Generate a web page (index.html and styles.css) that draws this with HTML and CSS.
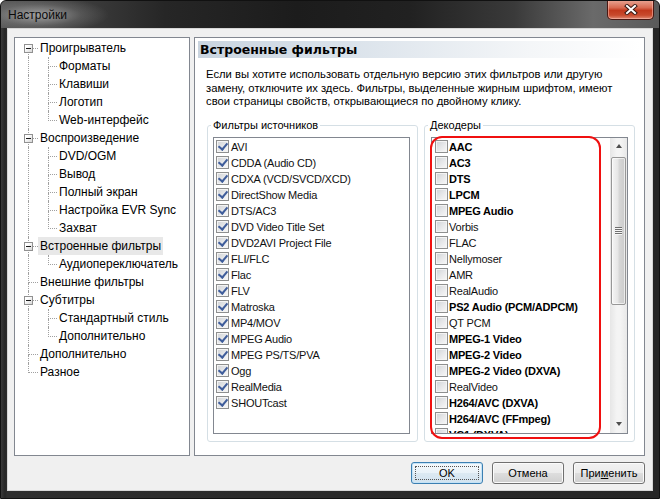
FILE: index.html
```html
<!DOCTYPE html>
<html lang="ru">
<head>
<meta charset="utf-8">
<title>Настройки</title>
<link rel="stylesheet" href="styles.css">
</head>
<body>
<div class="window">
  <div class="titlebar">
    <span class="title">Настройки</span>
    <div class="close">
      <svg width="14" height="11" viewBox="0 0 14 11"><path d="M3 2 L11 9 M11 2 L3 9" stroke="#3a1a14" stroke-width="4" stroke-linecap="square"/><path d="M3 2 L11 9 M11 2 L3 9" stroke="#fff" stroke-width="2" stroke-linecap="square"/></svg>
    </div>
  </div>
  <div class="client">
    <div class="main">
      <div class="tree">
        <div class="row r0 first"><span class="ind"></span><span class="ln"><span class="t"></span><span class="b"></span><i class="exp"></i></span><span class="txt">Проигрыватель</span></div>
        <div class="row r1"><span class="ind"></span><span class="vl"></span><span class="ln"><span class="t"></span><span class="b"></span></span><span class="txt">Форматы</span></div>
        <div class="row r1"><span class="ind"></span><span class="vl"></span><span class="ln"><span class="t"></span><span class="b"></span></span><span class="txt">Клавиши</span></div>
        <div class="row r1"><span class="ind"></span><span class="vl"></span><span class="ln"><span class="t"></span><span class="b"></span></span><span class="txt">Логотип</span></div>
        <div class="row r1 last"><span class="ind"></span><span class="vl"></span><span class="ln"><span class="t"></span><span class="b"></span></span><span class="txt">Web-интерфейс</span></div>
        <div class="row r0"><span class="ind"></span><span class="ln"><span class="t"></span><span class="b"></span><i class="exp"></i></span><span class="txt">Воспроизведение</span></div>
        <div class="row r1"><span class="ind"></span><span class="vl"></span><span class="ln"><span class="t"></span><span class="b"></span></span><span class="txt">DVD/OGM</span></div>
        <div class="row r1"><span class="ind"></span><span class="vl"></span><span class="ln"><span class="t"></span><span class="b"></span></span><span class="txt">Вывод</span></div>
        <div class="row r1"><span class="ind"></span><span class="vl"></span><span class="ln"><span class="t"></span><span class="b"></span></span><span class="txt">Полный экран</span></div>
        <div class="row r1"><span class="ind"></span><span class="vl"></span><span class="ln"><span class="t"></span><span class="b"></span></span><span class="txt">Настройка EVR Sync</span></div>
        <div class="row r1 last"><span class="ind"></span><span class="vl"></span><span class="ln"><span class="t"></span><span class="b"></span></span><span class="txt">Захват</span></div>
        <div class="row r0"><span class="ind"></span><span class="ln"><span class="t"></span><span class="b"></span><i class="exp"></i></span><span class="txt sel">Встроенные фильтры</span></div>
        <div class="row r1 last"><span class="ind"></span><span class="vl"></span><span class="ln"><span class="t"></span><span class="b"></span></span><span class="txt">Аудиопереключатель</span></div>
        <div class="row r0"><span class="ind"></span><span class="ln"><span class="t"></span><span class="b"></span></span><span class="txt">Внешние фильтры</span></div>
        <div class="row r0"><span class="ind"></span><span class="ln"><span class="t"></span><span class="b"></span><i class="exp"></i></span><span class="txt">Субтитры</span></div>
        <div class="row r1"><span class="ind"></span><span class="vl"></span><span class="ln"><span class="t"></span><span class="b"></span></span><span class="txt">Стандартный стиль</span></div>
        <div class="row r1 last"><span class="ind"></span><span class="vl"></span><span class="ln"><span class="t"></span><span class="b"></span></span><span class="txt">Дополнительно</span></div>
        <div class="row r0"><span class="ind"></span><span class="ln"><span class="t"></span><span class="b"></span></span><span class="txt">Дополнительно</span></div>
        <div class="row r0 last"><span class="ind"></span><span class="ln"><span class="t"></span><span class="b"></span></span><span class="txt">Разное</span></div>
      </div>
      <div class="page">
        <div class="page-head">Встроенные фильтры</div>
        <p class="desc">Если вы хотите использовать отдельную версию этих фильтров или другую<br>замену, отключите их здесь. Фильтры, выделенные жирным шрифтом, имеют<br>свои страницы свойств, открывающиеся по двойному клику.</p>
        <div class="groups">
          <div class="group">
            <span class="legend">Фильтры источников</span>
            <div class="listbox">
              <div class="items">
                <div class="item"><span class="cb on"></span>AVI</div>
                <div class="item"><span class="cb on"></span>CDDA (Audio CD)</div>
                <div class="item"><span class="cb on"></span>CDXA (VCD/SVCD/XCD)</div>
                <div class="item"><span class="cb on"></span>DirectShow Media</div>
                <div class="item"><span class="cb on"></span>DTS/AC3</div>
                <div class="item"><span class="cb on"></span>DVD Video Title Set</div>
                <div class="item"><span class="cb on"></span>DVD2AVI Project File</div>
                <div class="item"><span class="cb on"></span>FLI/FLC</div>
                <div class="item"><span class="cb on"></span>Flac</div>
                <div class="item"><span class="cb on"></span>FLV</div>
                <div class="item"><span class="cb on"></span>Matroska</div>
                <div class="item"><span class="cb on"></span>MP4/MOV</div>
                <div class="item"><span class="cb on"></span>MPEG Audio</div>
                <div class="item"><span class="cb on"></span>MPEG PS/TS/PVA</div>
                <div class="item"><span class="cb on"></span>Ogg</div>
                <div class="item"><span class="cb on"></span>RealMedia</div>
                <div class="item"><span class="cb on"></span>SHOUTcast</div>
              </div>
            </div>
          </div>
          <div class="group dec">
            <span class="legend">Декодеры</span>
            <div class="listbox">
              <div class="items">
                <div class="item bd"><span class="cb"></span>AAC</div>
                <div class="item bd"><span class="cb"></span>AC3</div>
                <div class="item bd"><span class="cb"></span>DTS</div>
                <div class="item bd"><span class="cb"></span>LPCM</div>
                <div class="item bd"><span class="cb"></span>MPEG Audio</div>
                <div class="item"><span class="cb"></span>Vorbis</div>
                <div class="item"><span class="cb"></span>FLAC</div>
                <div class="item"><span class="cb"></span>Nellymoser</div>
                <div class="item"><span class="cb"></span>AMR</div>
                <div class="item"><span class="cb"></span>RealAudio</div>
                <div class="item bd"><span class="cb"></span>PS2 Audio (PCM/ADPCM)</div>
                <div class="item"><span class="cb"></span>QT PCM</div>
                <div class="item bd"><span class="cb"></span>MPEG-1 Video</div>
                <div class="item bd"><span class="cb"></span>MPEG-2 Video</div>
                <div class="item bd"><span class="cb"></span>MPEG-2 Video (DXVA)</div>
                <div class="item"><span class="cb"></span>RealVideo</div>
                <div class="item bd"><span class="cb"></span>H264/AVC (DXVA)</div>
                <div class="item bd"><span class="cb"></span>H264/AVC (FFmpeg)</div>
                <div class="item bd"><span class="cb"></span>VC1 (DXVA)</div>
              </div>
              <div class="scrollbar">
                <div class="sb-btn"><i class="arr up"></i></div>
                <div class="sb-track"><div class="thumb"><i class="grip"></i></div></div>
                <div class="sb-btn"><i class="arr down"></i></div>
              </div>
            </div>
            <div class="mark"></div>
          </div>
        </div>
      </div>
    </div>
    <div class="buttons">
      <button class="btn def">OK</button>
      <button class="btn">Отмена</button>
      <button class="btn">При<u>м</u>енить</button>
    </div>
  </div>
</div>
</body>
</html>
```
FILE: styles.css
```css
* { box-sizing: border-box; margin: 0; padding: 0; }
html, body { width: 660px; height: 499px; overflow: hidden; background: #fff; }
body { font-family: "Liberation Sans", Arial, sans-serif; font-size: 12px; color: #000; }

.window {
  width: 660px; height: 499px;
  display: flex; flex-direction: column;
  border: 1px solid #111;
  border-radius: 6px 6px 0 0;
  background: linear-gradient(90deg, #3a3a3a 0, #262626 4px, #2e2e2e 6px, #262626 100%);
  overflow: hidden;
}

.titlebar {
  height: 27px; flex: none;
  display: flex; align-items: flex-start; justify-content: space-between;
  background:
    radial-gradient(ellipse 70px 18px at 38px 14px, rgba(190,190,190,0.75), rgba(160,160,160,0.25) 60%, rgba(0,0,0,0) 100%),
    linear-gradient(90deg, #555 0%, #3d3d3d 12%, #262626 25%, #1c1c1c 45%, #212121 62%, #3a3a3a 78%, #6a6a6a 90%, #5a5a5a 100%);
}
.title { margin-left: 7px; padding-top: 7px; line-height: 14px; font-size: 12px; color: #0a0a0a; }
.close {
  width: 47px; height: 20px; margin-right: 5px; margin-top: -1px;
  display: flex; align-items: center; justify-content: center;
  border: 1px solid #4a1812; border-top: none;
  border-radius: 0 0 5px 5px;
  background: linear-gradient(#e9a796 0%, #d86b52 40%, #c2391d 55%, #c84a2d 80%, #e08a72 100%);
  box-shadow: inset 0 0 0 1px rgba(255,200,190,0.5);
}

.client {
  flex: 1;
  margin: 0 6px 7px 6px;
  border: 1px solid #d6d6d6;
  background: #f0f0f0;
  padding: 8px 7px 0 6px;
  display: flex; flex-direction: column;
}
.main { display: flex; gap: 4px; height: 419px; flex: none; }

/* tree */
.tree { width: 176px; height: 419px; border: 1px solid #828790; background: #fff; padding-top: 1px; }
.row { display: flex; height: 18px; align-items: stretch; }
.ind { width: 13px; flex: none; }
.vl { width: 20px; flex: none; border-left: 1px dotted #a0a0a0; }
.ln { position: relative; display: flex; flex-direction: column; flex: none; }
.r0 .ln { width: 10px; }
.r1 .ln { width: 9px; }
.ln .t { height: 10px; border-left: 1px dotted #a0a0a0; border-bottom: 1px dotted #a0a0a0; }
.ln .b { flex: 1; border-left: 1px dotted #a0a0a0; }
.first .ln .t { border-left-color: transparent; }
.last .ln .b { border-left-color: transparent; }
.txt { padding: 0 2px; line-height: 18px; white-space: nowrap; }
.sel { background: #e8e8e8; }
.exp {
  position: absolute; left: -4px; top: 5px; width: 9px; height: 9px;
  border: 1px solid #919191; background: linear-gradient(135deg, #fff 30%, #d6d6d6);
}
.exp::after { content: ""; position: absolute; left: 1px; top: 3px; width: 5px; height: 1px; background: #1a1a1a; }

/* page */
.page { width: 451px; height: 419px; border: 1px solid #828790; background: #fff; }
.page-head {
  margin: 3px 3px 0 3px; height: 17px; padding-left: 2px;
  background: linear-gradient(90deg, #c9d4df 0%, #dbe3eb 35%, #f4f6f8 75%, #fff 100%);
  font-family: "DejaVu Sans", Verdana, sans-serif; font-weight: bold; font-size: 12.5px;
  line-height: 17px; color: #000;
}
.desc { margin-top: 10px; padding-left: 11px; font-size: 11.25px; line-height: 13.5px; white-space: nowrap; }
.groups { display: flex; gap: 6px; margin-top: 16px; padding-left: 12px; }
.group { position: relative; width: 211px; height: 317px; border: 1px solid #d5dfe5; border-radius: 3px; }
.legend {
  display: block; width: max-content; height: 14px; line-height: 14px;
  margin: -8px 0 0 3px; padding: 0 2px; background: #fff; font-size: 11px;
}
.listbox {
  display: flex; width: 197px; height: 297px; margin: 5px 0 0 5px;
  border: 1px solid #828790; background: #fff; overflow: hidden;
}
.dec .listbox { margin-left: 6px; }
.items { flex: 1; padding-top: 1px; overflow: hidden; }
.item {
  display: flex; align-items: center; height: 16px; padding-left: 2px;
  font-size: 11px; letter-spacing: -0.2px; white-space: nowrap; color: #111;
}
.dec .item { padding-left: 3px; }
.item.bd { font-weight: bold; letter-spacing: -0.2px; color: #000; }
.cb {
  position: relative; flex: none; width: 13px; height: 13px; margin-right: 2px;
  border: 1px solid #8e8f8f;
  background: linear-gradient(135deg, #cfd2d6 0%, #e6e7e9 50%, #f8f8f8 100%);
  box-shadow: inset 0 0 0 1px #f4f4f4;
}
.dec .cb { margin-right: 1px; }
.cb.on::after {
  content: ""; position: absolute; left: 3px; top: 0px; width: 4px; height: 7px;
  border: solid #3f5d9b; border-width: 0 2px 2px 0; transform: rotate(40deg);
}

/* scrollbar */
.scrollbar { width: 17px; flex: none; display: flex; flex-direction: column; background: linear-gradient(90deg, #e6e6e6, #f4f4f4 40%, #f4f4f4 60%, #e8e8e8); }
.sb-btn { height: 17px; flex: none; display: flex; align-items: center; justify-content: center; }
.arr { width: 0; height: 0; border-left: 3.5px solid transparent; border-right: 3.5px solid transparent; }
.arr.up { border-bottom: 4px solid #4e4e4e; }
.arr.down { border-top: 4px solid #4e4e4e; }
.sb-track { flex: 1; padding: 2px 1px 0 1px; }
.thumb {
  height: 148px; border: 1px solid #979797; border-radius: 2px;
  background: linear-gradient(90deg, #f5f5f5 0%, #e6e6e6 45%, #d7d7d7 55%, #cbcbcb 100%);
  box-shadow: inset 0 0 0 1px rgba(255,255,255,0.6);
  display: flex; align-items: center; justify-content: center;
}
.grip { width: 7px; height: 8px; background: repeating-linear-gradient(#6f6f6f 0 1px, #f6f6f6 1px 2px); }

.mark {
  position: absolute; left: 5px; top: 10px; width: 171px; height: 303px;
  border: 2px solid #f01010; border-radius: 12px;
}

/* buttons */
.buttons { display: flex; justify-content: flex-end; gap: 9px; margin-top: 6px; }
.btn {
  position: relative; width: 72px; height: 22px;
  font-family: "Liberation Sans", Arial, sans-serif; font-size: 11px; color: #000;
  border: 1px solid #707070; border-radius: 3px;
  background: linear-gradient(#f2f2f2 0%, #ebebeb 50%, #dddddd 51%, #cfcfcf 100%);
  box-shadow: inset 0 0 0 1px #fbfbfb;
}
.btn.def {
  border-color: #3c7fb1;
  background: linear-gradient(#f4f9fc 0%, #e9f2f8 50%, #dce9f2 51%, #d2e3ef 100%);
  box-shadow: inset 0 0 0 1px #c4e3f7;
}
.btn.def::after {
  content: ""; position: absolute; left: 3px; top: 3px; right: 3px; bottom: 3px;
  border: 1px dotted #555;
}
```
